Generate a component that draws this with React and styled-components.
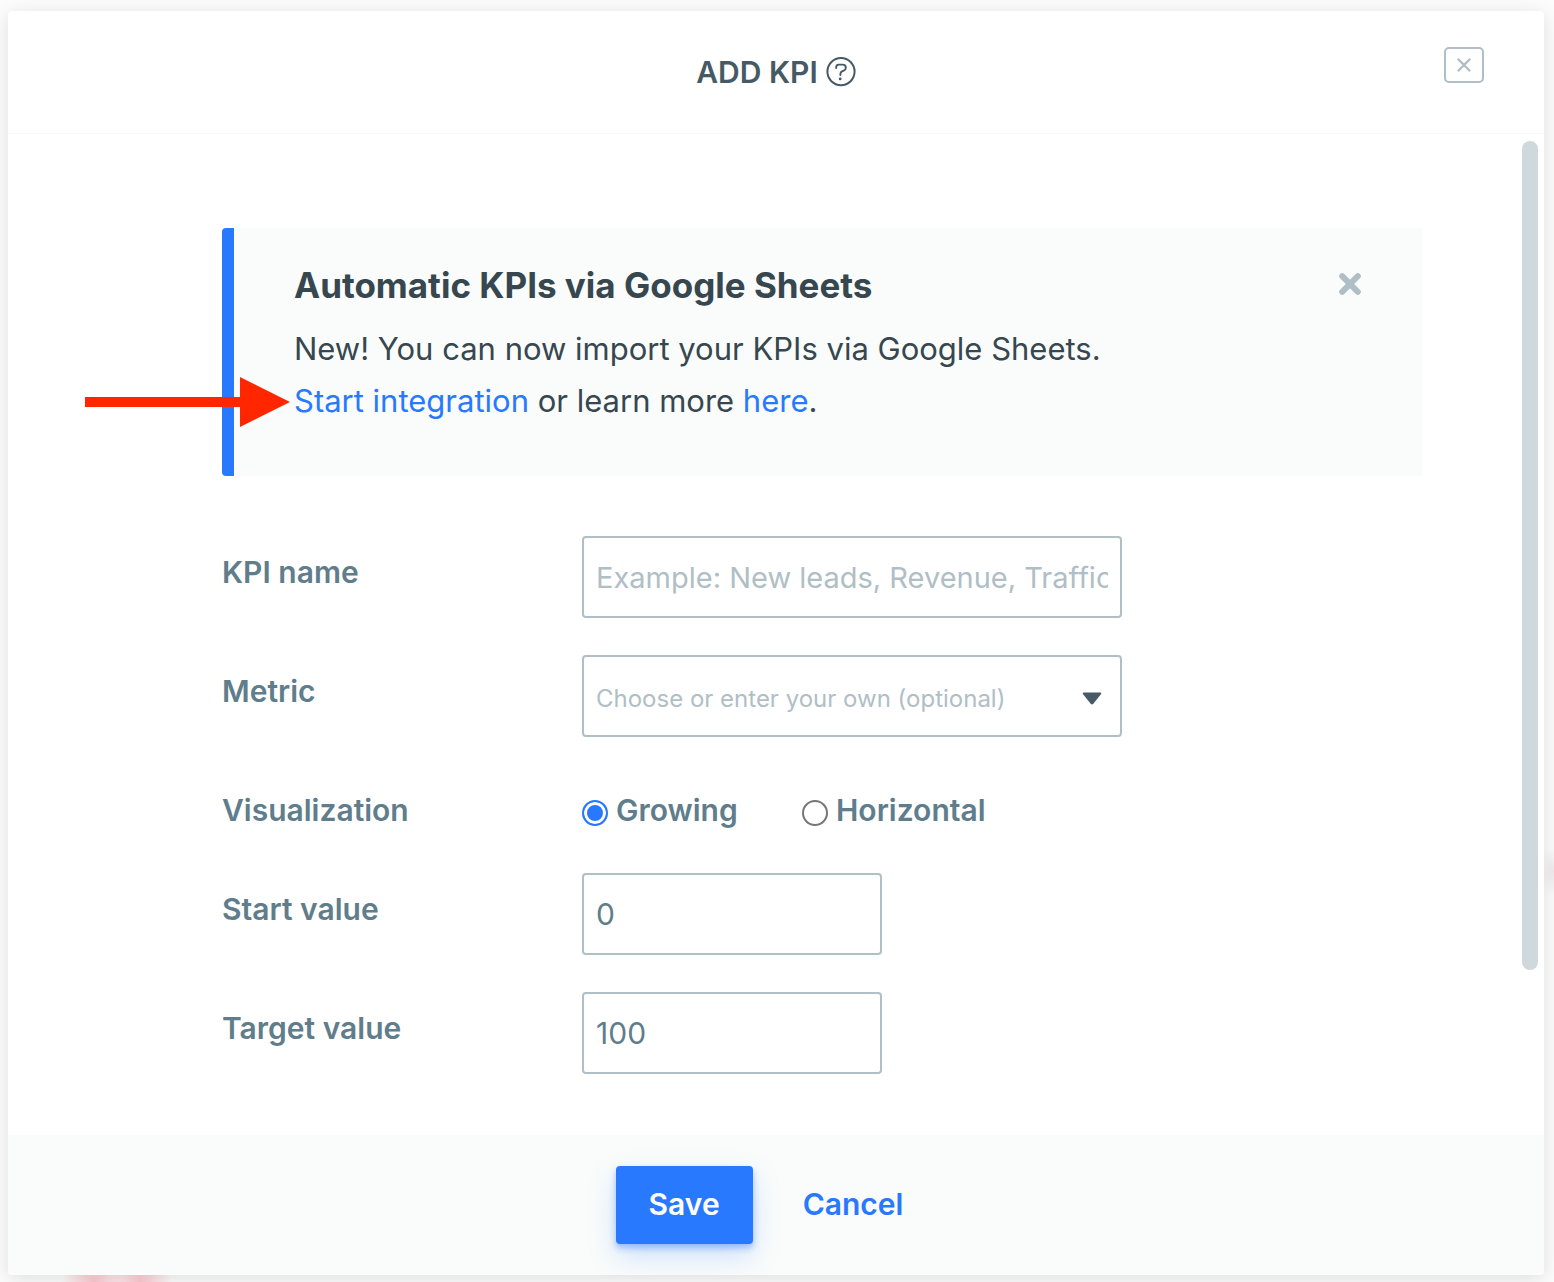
import React, { useState } from "react";
import styled, { createGlobalStyle } from "styled-components";

const App = () => {
  const [showNotice, setShowNotice] = useState(true);
  const [visualization, setVisualization] = useState("growing");
  const [startValue, setStartValue] = useState("0");
  const [targetValue, setTargetValue] = useState("100");

  return (
    <Page>
      <GlobalStyle />
      <Modal role="dialog" aria-labelledby="modal-title">
        <Header>
          <Title>
            <h1 id="modal-title">ADD KPI</h1>
            <HelpButton type="button" aria-label="Help">
              <svg width="30" height="30" viewBox="0 0 30 30" fill="none" stroke="currentColor">
                <circle cx="15" cy="14.6" r="13.6" strokeWidth="2" />
                <path d="M10.2 11V10.2Q10.2 7.6 12.8 7.6H16.8Q19.8 7.6 19.8 10.7Q19.8 12.8 17.8 13.6L16 14.3Q14.4 15 14.4 17V18" strokeWidth="1.9" strokeLinecap="round" />
                <circle cx="14.2" cy="21.9" r="1.4" fill="currentColor" stroke="none" />
              </svg>
            </HelpButton>
          </Title>
          <CloseButton type="button" aria-label="Close">
            <svg width="14" height="14" viewBox="0 0 14 14" stroke="currentColor" strokeWidth="2.4" strokeLinecap="round">
              <path d="M1.5 1.5L12.5 12.5M12.5 1.5L1.5 12.5" />
            </svg>
          </CloseButton>
        </Header>

        <Body>
          <Content>
            {showNotice && (
              <Notice>
                <div>
                  <h2>Automatic KPIs via Google Sheets</h2>
                  <p>
                    New! You can now import your KPIs via Google Sheets.
                    <br />
                    <a href="#integration">Start integration</a> or learn more{" "}
                    <a href="#learn-more">here</a>.
                  </p>
                </div>
                <DismissButton type="button" aria-label="Dismiss" onClick={() => setShowNotice(false)}>
                  <svg width="24" height="24" viewBox="0 0 24 24" stroke="currentColor" strokeWidth="6" strokeLinecap="round">
                    <path d="M4.2 4.2L19.8 19.8M19.8 4.2L4.2 19.8" />
                  </svg>
                </DismissButton>
                <Arrow width="206" height="50" viewBox="0 0 206 50" aria-hidden="true">
                  <path d="M0 20H155V0L205 25L155 50V30H0Z" fill="#ff2600" />
                </Arrow>
              </Notice>
            )}

            <Form id="kpi-form" onSubmit={(e) => e.preventDefault()}>
              <Row>
                <Label htmlFor="kpi-name">KPI name</Label>
                <Input id="kpi-name" type="text" placeholder="Example: New leads, Revenue, Traffic" />
              </Row>
              <Row>
                <Label htmlFor="metric">Metric</Label>
                <SelectWrap>
                  <Select id="metric" defaultValue="">
                    <option value="">Choose or enter your own (optional)</option>
                  </Select>
                  <svg width="20" height="13" viewBox="0 0 20 13" aria-hidden="true">
                    <path d="M1.8 0.5H18.2Q20 0.5 18.9 2.3L11.3 11.7Q10 13.2 8.7 11.7L1.1 2.3Q0 0.5 1.8 0.5Z" fill="#455a64" />
                  </svg>
                </SelectWrap>
              </Row>
              <Row role="radiogroup" aria-labelledby="visualization-label">
                <Label as="span" id="visualization-label">Visualization</Label>
                <RadioGroup>
                  <RadioLabel>
                    <Radio
                      type="radio"
                      name="visualization"
                      checked={visualization === "growing"}
                      onChange={() => setVisualization("growing")}
                    />
                    Growing
                  </RadioLabel>
                  <RadioLabel>
                    <Radio
                      type="radio"
                      name="visualization"
                      checked={visualization === "horizontal"}
                      onChange={() => setVisualization("horizontal")}
                    />
                    Horizontal
                  </RadioLabel>
                </RadioGroup>
              </Row>
              <Row>
                <Label htmlFor="start-value">Start value</Label>
                <Input id="start-value" type="text" $short value={startValue} onChange={(e) => setStartValue(e.target.value)} />
              </Row>
              <Row>
                <Label htmlFor="target-value">Target value</Label>
                <Input id="target-value" type="text" $short value={targetValue} onChange={(e) => setTargetValue(e.target.value)} />
              </Row>
            </Form>
          </Content>
          <ScrollRail>
            <ScrollThumb />
          </ScrollRail>
        </Body>

        <Footer>
          <Button type="submit" form="kpi-form" $primary>Save</Button>
          <Button type="button">Cancel</Button>
        </Footer>
      </Modal>
    </Page>
  );
};

const GlobalStyle = createGlobalStyle`
  *, *::before, *::after {
    box-sizing: border-box;
  }
  body {
    margin: 0;
    font-family: Inter, "Liberation Sans", sans-serif;
    color: #37474f;
  }
  h1, h2, p {
    margin: 0;
  }
  button, input, select {
    font-family: inherit;
  }
  button {
    cursor: pointer;
  }
`;

const Page = styled.div`
  display: flex;
  height: 100vh;
  padding: 11px 10px 7px 8px;
  background:
    radial-gradient(32px 32px at 94px 100%, #fbc8cf, transparent),
    radial-gradient(32px 32px at 140px 100%, #fbc8cf, transparent),
    radial-gradient(16px 24px at 100% 872px, #efeaeb, transparent),
    #fcfcfc;
`;

const Modal = styled.div`
  display: flex;
  flex: 1;
  flex-direction: column;
  min-width: 0;
  overflow: hidden;
  background: #fff;
  border-radius: 4px;
  box-shadow: 0 4px 20px rgba(0, 0, 0, 0.12);
`;

const Header = styled.header`
  display: grid;
  grid-template-columns: 1fr auto 1fr;
  height: 123px;
  flex-shrink: 0;
  padding: 0 60px;
  border-bottom: 1px solid #f7f9f9;
`;

const Title = styled.div`
  display: flex;
  grid-column: 2;
  align-items: center;
  gap: 8px;
  color: #455a64;

  h1 {
    font-size: 30px;
    font-weight: 600;
    line-height: 40px;
  }
`;

const HelpButton = styled.button`
  display: flex;
  padding: 0;
  border: 0;
  background: none;
  color: inherit;
`;

const CloseButton = styled.button`
  display: flex;
  align-items: center;
  justify-content: center;
  justify-self: end;
  width: 40px;
  height: 36px;
  margin-top: 36px;
  padding: 0;
  border: 2px solid #b0bec5;
  border-radius: 5px;
  background: none;
  color: #b0bec5;
`;

const Body = styled.div`
  display: flex;
  flex: 1;
  min-height: 0;
  overflow: hidden;
`;

const Content = styled.div`
  flex: 1;
  padding: 94px 94px 0 214px;
`;

const ScrollRail = styled.div`
  width: 28px;
  padding: 7px 6px;
`;

const ScrollThumb = styled.div`
  width: 16px;
  height: 84%;
  border-radius: 8px;
  background: #cfd8dc;
`;

const Notice = styled.section`
  position: relative;
  display: flex;
  align-items: flex-start;
  justify-content: space-between;
  margin-bottom: 60px;
  padding: 35px 60px 49px;
  border-left: 12px solid #2979ff;
  border-radius: 4px;
  background: #fafcfb;

  h2 {
    margin-bottom: 16px;
    font-size: 35px;
    font-weight: 700;
    line-height: 44px;
  }
  p {
    font-size: 31px;
    line-height: 52px;
  }
  a {
    color: #2979ff;
    text-decoration: none;
  }
`;

const DismissButton = styled.button`
  display: flex;
  margin-top: 9px;
  padding: 0;
  border: 0;
  background: none;
  color: #b0bec5;
`;

/* callout pointing at the integration link */
const Arrow = styled.svg`
  position: absolute;
  top: 149px;
  left: -149px;
  pointer-events: none;
`;

const Form = styled.form`
  display: flex;
  flex-direction: column;
  gap: 37px;
`;

const Row = styled.div`
  display: grid;
  grid-template-columns: 360px 1fr;
  align-items: start;
  min-height: 62px;
`;

const Label = styled.label`
  padding-top: 16px;
  color: #607d8b;
  font-size: 30px;
  font-weight: 600;
  line-height: 40px;
`;

const Input = styled.input`
  width: 100%;
  max-width: ${({ $short }) => ($short ? "300px" : "540px")};
  height: 82px;
  padding: 0 12px;
  border: 2px solid #b0bec5;
  border-radius: 4px;
  background: #fff;
  color: #607d8b;
  font-size: 30px;

  &::placeholder {
    color: #b0bec5;
    font-size: 29px;
  }
`;

const SelectWrap = styled.div`
  position: relative;
  max-width: 540px;

  svg {
    position: absolute;
    top: 37px;
    right: 20px;
    pointer-events: none;
  }
`;

const Select = styled.select`
  display: block;
  width: 100%;
  height: 82px;
  padding: 4px 48px 0 12px;
  appearance: none;
  border: 2px solid #b0bec5;
  border-radius: 4px;
  background: #fff;
  color: #b0bec5;
  font-size: 24px;
`;

const RadioGroup = styled.div`
  display: flex;
  padding-top: 16px;
`;

const RadioLabel = styled.label`
  display: flex;
  align-items: center;
  gap: 8px;
  width: 220px;
  color: #607d8b;
  font-size: 30px;
  font-weight: 600;
  line-height: 40px;
`;

const Radio = styled.input`
  width: 26px;
  height: 26px;
  margin: 6px 0 0;
  appearance: none;
  border: 2px solid #767676;
  border-radius: 50%;
  background: #fff;

  &:checked {
    border-color: #2979ff;
    background: #2979ff;
    box-shadow: inset 0 0 0 3px #fff;
  }
`;

const Footer = styled.footer`
  display: flex;
  flex-shrink: 0;
  align-items: center;
  justify-content: center;
  gap: 17px;
  height: 140px;
  background: #fafcfb;
`;

const Button = styled.button`
  height: 78px;
  padding: 0 33px 2px;
  border: 0;
  border-radius: 4px;
  background: ${({ $primary }) => ($primary ? "#2979ff" : "none")};
  box-shadow: ${({ $primary }) =>
    $primary ? "0 4px 6px rgba(41, 121, 255, 0.4), 0 12px 28px rgba(41, 121, 255, 0.22)" : "none"};
  color: ${({ $primary }) => ($primary ? "#fff" : "#2979ff")};
  font-size: 30px;
  font-weight: 600;
`;

export default App;
